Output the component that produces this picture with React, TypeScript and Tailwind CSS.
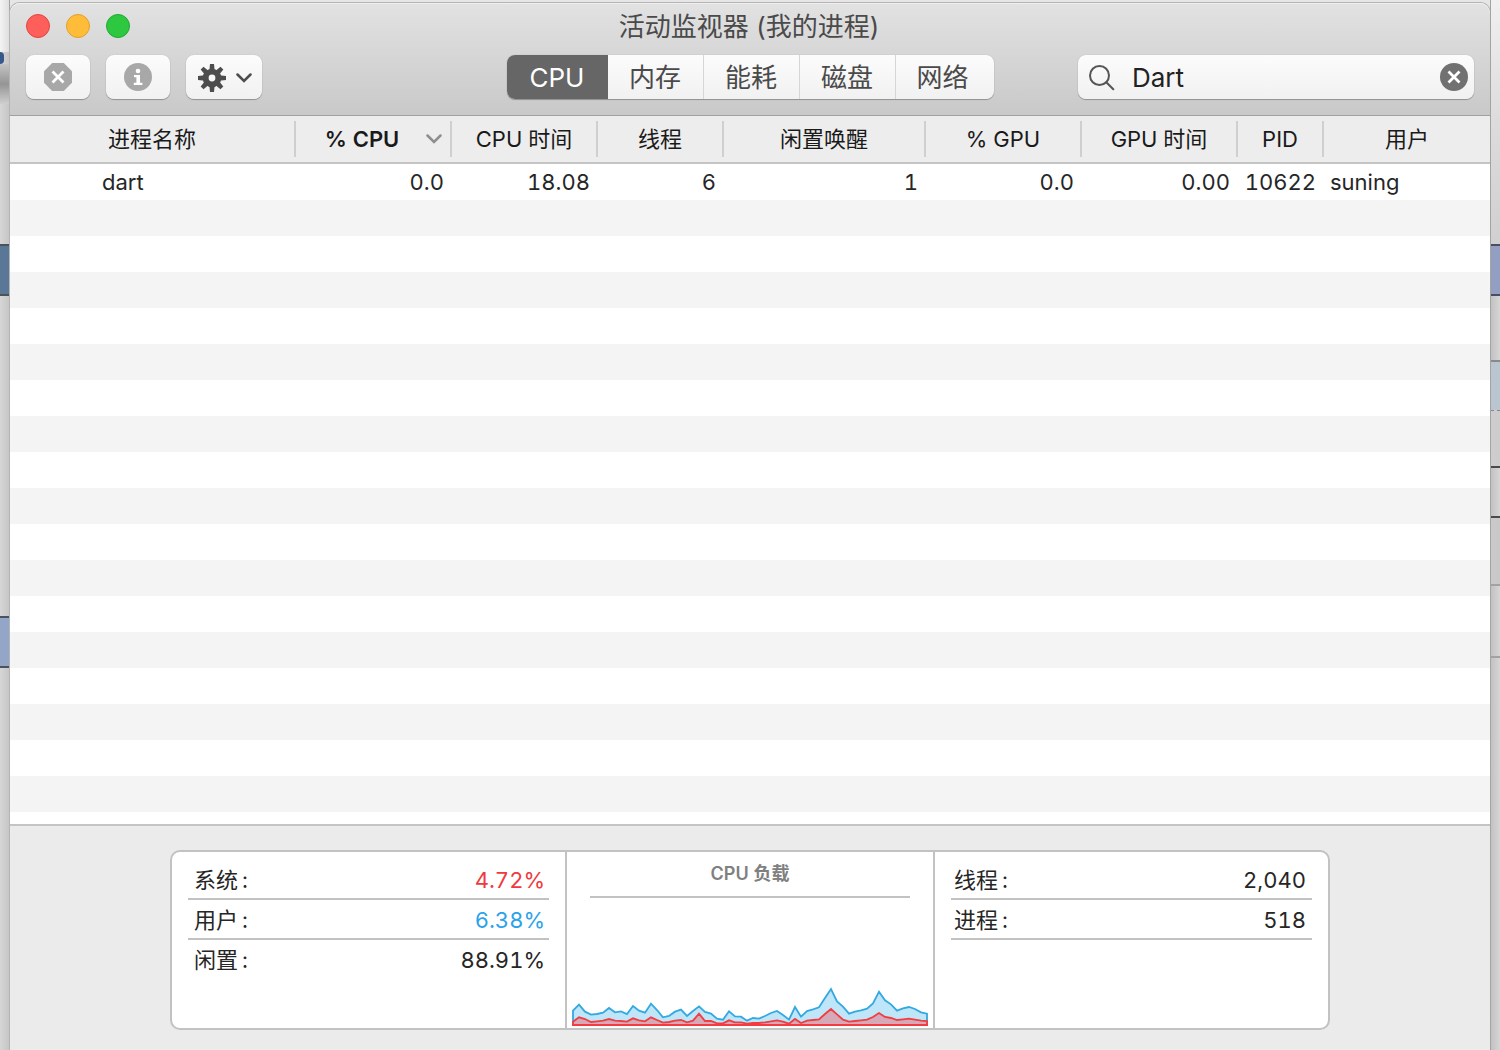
import React, { useState } from 'react';

const TABS = [
  { title: 'CPU', style: 'w-[101px]' },
  { title: '内存', style: 'w-[95px]' },
  { title: '能耗', style: 'w-24 border-l' },
  { title: '磁盘', style: 'w-24 border-l' },
  { title: '网络', style: 'w-[99px] border-l pr-1' },
];

const COLUMNS = [
  { title: '进程名称', width: 'w-[286px]' },
  { title: '% CPU', width: 'w-[156px]' },
  { title: 'CPU 时间', width: 'w-[146px]' },
  { title: '线程', width: 'w-[126px]' },
  { title: '闲置唤醒', width: 'w-[202px]' },
  { title: '% GPU', width: 'w-[156px]' },
  { title: 'GPU 时间', width: 'w-[156px]' },
  { title: 'PID', width: 'w-[86px]' },
  { title: '用户', width: 'w-[166px]' },
];

const VALUES = ['0.0', '18.08', '6', '1', '0.0', '0.00', '10622'];

// Heights above the baseline, one sample per step, oldest first.
const TOTAL_LOAD = [
  43, 61, 40, 31, 33, 37, 51, 38, 41, 33, 57, 43, 37, 64, 45, 23, 27, 40, 46, 27,
  42, 56, 39, 34, 19, 16, 41, 26, 25, 13, 21, 19, 27, 36, 42, 30, 16, 54, 25, 42,
  47, 53, 81, 108, 71, 55, 34, 40, 44, 49, 65, 100, 74, 62, 43, 50, 54, 48, 38, 34,
];
const SYSTEM_LOAD = [
  10, 23, 18, 9, 11, 13, 18, 13, 12, 10, 20, 14, 11, 23, 15, 7, 9, 13, 15, 8,
  13, 34, 12, 12, 5, 5, 14, 8, 8, 4, 6, 6, 8, 11, 14, 10, 4, 18, 6, 13,
  15, 17, 33, 48, 32, 16, 10, 12, 14, 16, 24, 36, 24, 21, 15, 17, 19, 16, 13, 12,
];

function areaPath(samples: number[]) {
  const top = samples.map((v, i) => `${3 + i * 18},${117 - v}`).join(' L');
  return `M3,117 L${top} L1065,117 Z`;
}

function LoadChart() {
  return (
    <svg viewBox="0 0 1068 120" preserveAspectRatio="none" className="block h-10 w-full" role="img" aria-label="CPU 负载">
      <path d={areaPath(TOTAL_LOAD)} fill="#bfe5f9" stroke="#33a9e0" strokeWidth="5.5" />
      <path d={areaPath(SYSTEM_LOAD)} fill="#d5a9b8" stroke="#f23c3f" strokeWidth="5.5" />
    </svg>
  );
}

function StopIcon() {
  return (
    <svg viewBox="0 0 28 28" className="size-7" aria-hidden="true">
      <path d="M8.2 0h11.6L28 8.2v11.6L19.8 28H8.2L0 19.8V8.2z" fill="#a8a8a8" />
      <path d="M8.5 8.500l11 11M19.5 8.500l-11 11" stroke="#fff" strokeWidth="2.8" />
    </svg>
  );
}

function InfoIcon() {
  return (
    <svg viewBox="0 0 28 28" className="size-7" aria-hidden="true">
      <circle cx="14" cy="14" r="14" fill="#a8a8a8" />
      <circle cx="14" cy="8" r="2.3" fill="#fff" />
      <path d="M10 12h6v7.7h2.4V22H9.8v-2.3h2.6v-5.400H10z" fill="#fff" />
    </svg>
  );
}

function GearIcon() {
  return (
    <svg viewBox="0 0 28 28" className="size-7" aria-hidden="true">
      <g fill="#4d4d4d">
        {[0, 45, 90, 135].map((a) => (
          <path key={a} d="M12 0h4l.7 7v14l-.7 7h-4l-.7-7V7z" transform={`rotate(${a} 14 14)`} />
        ))}
        <circle cx="14" cy="14" r="9.3" />
      </g>
      <circle cx="14" cy="14" r="3.4" fill="#f7f7f7" />
    </svg>
  );
}

function Chevron({ color }: { color: string }) {
  return (
    <svg viewBox="0 0 16 10" className="h-[10px] w-4" fill="none" stroke={color} strokeWidth="2.5" aria-hidden="true">
      <path d="M1.5 1.500L8 8l6.500-6.500" strokeLinecap="round" />
    </svg>
  );
}

const control =
  'flex h-11 items-center justify-center rounded-lg bg-linear-to-b from-[#fcfcfc] to-[#f1f1f1] shadow-[0_1px_1px_rgba(0,0,0,0.28),0_0_1px_rgba(0,0,0,0.25)]';

function TitleBar() {
  const [tab, setTab] = useState('CPU');
  const [query, setQuery] = useState('Dart');
  return (
    <header className="rounded-t-[10px] border-b border-[#a0a0a0] bg-linear-to-b from-[#e2e2e2] to-[#c9c9c9] px-4 pb-4 shadow-[inset_0_1px_0_#f0f0f0]">
      <div className="grid h-[46px] grid-cols-[1fr_auto_1fr] items-center">
        <div className="flex gap-4">
          <button aria-label="关闭" className="size-6 rounded-full border border-[#e0443e] bg-[#fe5f5a]" />
          <button aria-label="最小化" className="size-6 rounded-full border border-[#dfa12f] bg-[#febc38]" />
          <button aria-label="缩放" className="size-6 rounded-full border border-[#1fa833] bg-[#2dc840]" />
        </div>
        <h1 className="pt-0.5 pr-0.5 text-[26px] leading-8 text-[#4a4a4a]">活动监视器 (我的进程)</h1>
      </div>
      <div className="mt-1.5 grid grid-cols-[1fr_auto_1fr] items-center">
        <div className="flex gap-4">
          <button aria-label="停止进程" className={`${control} w-16`}>
            <StopIcon />
          </button>
          <button aria-label="检查进程" className={`${control} w-16`}>
            <InfoIcon />
          </button>
          <button aria-label="操作" className={`${control} w-19 gap-[10px] pt-0.5 pl-0.5`}>
            <GearIcon />
            <Chevron color="#4d4d4d" />
          </button>
        </div>
        <nav className="flex h-11 rounded-lg bg-linear-to-b from-[#fcfcfc] to-[#f1f1f1] shadow-[0_1px_1px_rgba(0,0,0,0.28),0_0_1px_rgba(0,0,0,0.25)]">
          {TABS.map((t) => (
            <button
              key={t.title}
              onClick={() => setTab(t.title)}
              className={`border-[#d6d6d6] pt-0.5 text-[26px] leading-8 first:rounded-l-lg last:rounded-r-lg ${t.style} ${
                tab === t.title ? 'bg-[#666] text-white' : 'text-[#4a4a4a]'
              }`}
            >
              {t.title}
            </button>
          ))}
        </nav>
        <label className={`${control} w-[396px] gap-4 justify-self-end px-1.5`}>
          <svg viewBox="0 0 28 28" className="ml-1 size-7 shrink-0" fill="none" stroke="#555" strokeWidth="2" aria-hidden="true">
            <circle cx="11.500" cy="12.500" r="9.500" />
            <path d="M18.300 19.300l7 7" strokeLinecap="round" />
          </svg>
          <input
            aria-label="搜索"
            value={query}
            onChange={(e) => setQuery(e.target.value)}
            className="min-w-0 flex-1 bg-transparent pt-0.5 text-[26px] leading-8 text-[#222] outline-none"
          />
          <button aria-label="清除" onClick={() => setQuery('')}>
            <svg viewBox="0 0 28 28" className="size-7" aria-hidden="true">
              <circle cx="14" cy="14" r="14" fill="#717171" />
              <path d="M8.500 8.500l11 11M19.500 8.500l-11 11" stroke="#fff" strokeWidth="2.800" />
            </svg>
          </button>
        </label>
      </div>
    </header>
  );
}

function ProcessTable() {
  return (
    <main className="flex flex-1 flex-col bg-white">
      <table className="w-full table-fixed border-separate border-spacing-0 text-[22px] leading-7 tabular-nums">
        <thead>
          <tr className="text-[#1a1a1a]">
            {COLUMNS.map((c, i) => (
              <th key={c.title} scope="col" className={`${c.width} h-12 border-b-2 border-[#c4c4c4] bg-[#ededed] p-0 font-normal`}>
                <div className={`flex h-9 items-center ${i < 8 ? 'border-r-2 border-[#cfcfcf]' : ''}`}>
                  {i === 1 ? (
                    <>
                      <span className="flex-1 pl-0.5 text-center font-semibold">{c.title}</span>
                      <span className="pr-2">
                        <Chevron color="#8e8e8e" />
                      </span>
                    </>
                  ) : (
                    <span className="flex-1 text-center">{c.title}</span>
                  )}
                </div>
              </th>
            ))}
          </tr>
        </thead>
        <tbody>
          <tr className="text-[#262626]">
            <td className="h-9 p-0 pl-[92px]">dart</td>
            {VALUES.map((v, i) => (
              <td key={i} className="p-0 pr-2 text-right">
                {v}
              </td>
            ))}
            <td className="p-0 pl-1.5">suning</td>
          </tr>
        </tbody>
      </table>
      <div className="flex-1 bg-[repeating-linear-gradient(to_bottom,#f4f4f4_0,#f4f4f4_36px,#fff_36px,#fff_72px)]" />
    </main>
  );
}

function Stat({ label, value, color, pad, line }: { label: string; value: string; color: string; pad: string; line: boolean }) {
  return (
    <div className={`flex h-10 items-center justify-between border-b-2 pt-0.5 ${pad} ${line ? 'border-[#c2c2c2]' : 'border-transparent'}`}>
      <dt className="flex gap-1 text-[#262626]">
        <span>{label}</span>
        <span>:</span>
      </dt>
      <dd className={color}>{value}</dd>
    </div>
  );
}

function Summary() {
  return (
    <footer className="border-t-2 border-[#c4c4c4] bg-[#ebebeb] px-40 pt-6 pb-5">
      <div className="grid min-h-[180px] grid-cols-[395fr_368fr_393fr] rounded-[10px] border-2 border-[#c2c2c2] bg-white text-[22px] leading-7 tabular-nums">
        <dl className="border-r-2 border-[#c2c2c2] px-4 pt-2">
          <Stat label="系统" value="4.72%" color="text-[#ee3a40]" pad="pl-1.5 pr-1" line />
          <Stat label="用户" value="6.38%" color="text-[#2ba3ea]" pad="pl-1.5 pr-1" line />
          <Stat label="闲置" value="88.91%" color="text-[#262626]" pad="pl-1.5 pr-1" line={false} />
        </dl>
        <section className="flex flex-col justify-between border-r-2 border-[#c2c2c2] px-[5px] pb-0.5">
          <h2 className="mx-[18px] border-b-2 border-[#c2c2c2] pt-[9px] pb-[9px] text-center text-[18px] leading-[26px] font-semibold text-[#808080]">
            CPU 负载
          </h2>
          <LoadChart />
        </section>
        <dl className="px-4 pt-2">
          <Stat label="线程" value="2,040" color="text-[#262626]" pad="pl-[3px] pr-1.5" line />
          <Stat label="进程" value="518" color="text-[#262626]" pad="pl-[3px] pr-1.5" line />
        </dl>
      </div>
    </footer>
  );
}

function LeftBackdrop() {
  return (
    <div className="flex w-[10px] flex-col border-r border-[#a3a3a3] bg-linear-to-r from-[#d6d6d6] to-[#c6c6c6]" aria-hidden="true">
      <div className="h-[52px] bg-linear-to-r from-[#f4f4f4] to-[#dedede]" />
      <div className="h-3 w-1 rounded-r-full bg-[#36598b]" />
      <div className="h-10 bg-linear-to-b from-[#c4c4c4] via-[#959595] to-[#cfcfcf]" />
      <div className="h-[140px]" />
      <div className="h-[52px] border-y-2 border-[#4b5358] bg-[#5b7798]" />
      <div className="h-80" />
      <div className="h-[52px] border-y-2 border-[#4d5261] bg-[#93a6c8]" />
    </div>
  );
}

function RightBackdrop() {
  return (
    <div className="flex w-[10px] flex-col border-l border-[#a3a3a3] bg-linear-to-r from-[#c2c2c2] to-[#d6d6d6]" aria-hidden="true">
      <div className="h-[244px] bg-linear-to-b from-[#f0f0f0] via-[#dcdcdc] to-[#d0d0d0]" />
      <div className="h-[52px] border-y-2 border-[#4a4e60] bg-[#929fc3]" />
      <div className="h-16" />
      <div className="h-[50px] border-t-2 border-[#87898c] bg-[#bac6cf]" />
      <div className="h-[56px] border-t border-dashed border-[#888] bg-[#cdcdcd]" />
      <div className="h-[52px] border-y-2 border-[#4a4a4a]" />
      <div className="h-[66px] bg-[#c9c9c9]" />
      <div className="h-[72px] border-t-2 border-[#a2a2a2]" />
      <div className="border-t-2 border-[#a2a2a2]" />
    </div>
  );
}

export default function App() {
  return (
    <div className="flex min-h-screen bg-[#e6e6e6] [font-family:Inter,'Noto_Sans_CJK_SC',sans-serif]">
      <LeftBackdrop />
      <div className="mt-[3px] flex min-w-0 flex-1 flex-col rounded-t-[10px] shadow-[0_0_0_1px_#b4b4b4]">
        <TitleBar />
        <ProcessTable />
        <Summary />
      </div>
      <RightBackdrop />
    </div>
  );
}
